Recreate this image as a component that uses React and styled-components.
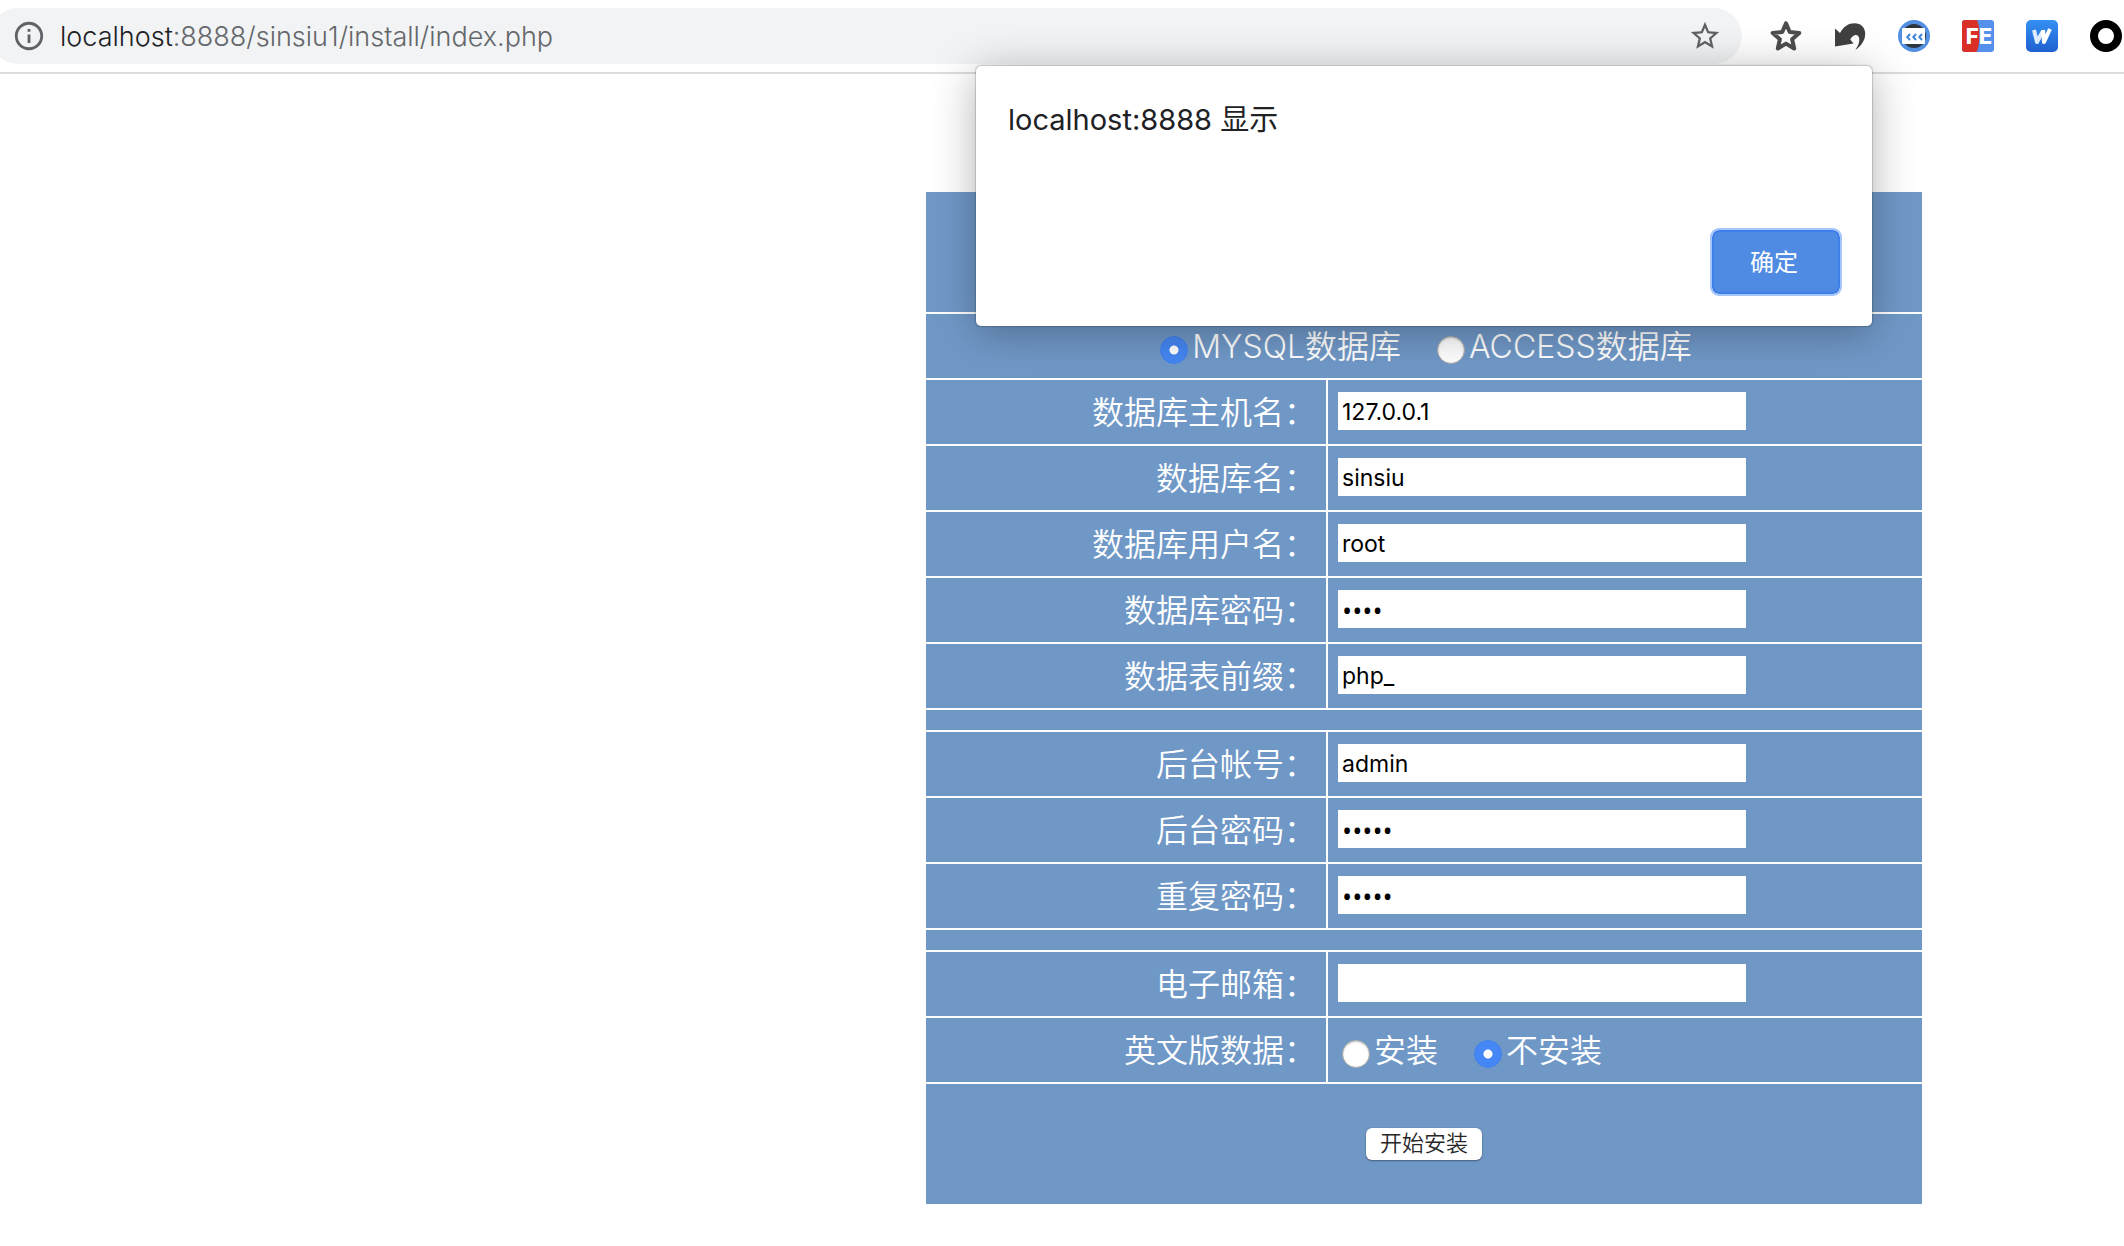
import React from "react";
import styled, { createGlobalStyle, css } from "styled-components";

const panelBlue = "#7098c7";
const uiFont = `Inter, "Noto Sans CJK SC", sans-serif`;

const GlobalStyle = createGlobalStyle`
  * { box-sizing: border-box; }
  body { margin: 0; background: #fff; font-family: ${uiFont}; overflow-x: hidden; }
  button, input { font-family: inherit; }
`;

const Page = styled.div`
  position: relative;
  min-height: 100vh;
  overflow: hidden;
`;

/* ---------- browser toolbar ---------- */

const Toolbar = styled.header`
  display: flex;
  align-items: center;
  gap: 28px;
  padding: 8px 2px 8px 0;
  border-bottom: 2px solid #dadce0;
`;

const AddressBar = styled.div`
  display: flex;
  align-items: center;
  flex: 1;
  height: 56px;
  margin-left: -10px;
  padding: 0 20px 0 22px;
  border-radius: 28px;
  background: #f1f3f4;
  color: #5f6368;
`;

const Address = styled.a`
  flex: 1;
  padding: 2px 0 0 14px;
  color: #64676b;
  font-size: 27px;
  font-weight: 300;
  line-height: 32px;
  text-decoration: none;
`;

const Host = styled.span`
  color: #202124;
`;

const IconButton = styled.button`
  display: flex;
  padding: 0;
  border: 0;
  background: none;
  color: ${(p) => p.$color || "inherit"};
`;

const Extensions = styled.nav`
  display: flex;
  gap: 32px;
`;

const Icon = styled.svg`
  display: block;
  width: ${(p) => p.$size || 32}px;
  height: ${(p) => p.$size || 32}px;
`;

const LogoText = styled.text`
  font-family: Inter, sans-serif;
  font-size: ${(p) => p.$size}px;
  font-weight: 800;
  fill: #fff;
  text-anchor: middle;
`;

const InfoIcon = () => (
  <Icon $size={34} viewBox="0 0 24 24" fill="currentColor">
    <path d="M11 17h2v-6h-2v6zm1-15C6.48 2 2 6.48 2 12s4.48 10 10 10 10-4.48 10-10S17.52 2 12 2zm0 18c-4.41 0-8-3.59-8-8s3.59-8 8-8 8 3.59 8 8-3.59 8-8 8zM11 9h2V7h-2v2z" />
  </Icon>
);

const StarIcon = () => (
  <Icon $size={34} viewBox="0 0 24 24" fill="currentColor">
    <path d="M22 9.24l-7.19-.62L12 2 9.19 8.63 2 9.24l5.46 4.73L5.82 21 12 17.27 18.18 21l-1.63-7.03L22 9.24zM12 15.4l-3.76 2.27 1-4.28-3.32-2.88 4.38-.38L12 6.1l1.71 4.04 4.38.38-3.32 2.88 1 4.28L12 15.4z" />
  </Icon>
);

const BoldStarIcon = () => (
  <Icon viewBox="0 0 32 32" fill="none" stroke="currentColor" strokeWidth="4" strokeLinejoin="round">
    <path d="M16 3.4l3.7 8.6 9.6.9-7.2 6.3 2.1 9.3L16 23.6l-8.2 4.9 2.1-9.3L2.7 12.9l9.6-.9z" />
  </Icon>
);

const UndoIcon = () => (
  <Icon viewBox="0 0 32 32" fill="currentColor">
    <path d="M1 8.5L6 13C9.5 6.500 14.500 3.300 20.500 3.300c6.800 0 11 4.700 10.700 11.200-.3 6.300-4 11.500-9.900 15.500 2.700-3.800 4.400-8 4-11.200-.4-3-2.300-4.300-4.700-3.500-2 .7-3.400 2.200-4.300 4.300l3.200 3.900L1 26.500z" />
  </Icon>
);

const CodeIcon = () => (
  <Icon viewBox="0 0 32 32">
    <circle cx="16" cy="16" r="16" fill="#5490e2" />
    <circle cx="16" cy="16" r="12" fill="#2d3540" />
    <rect x="4" y="8" width="23" height="16" rx="1" fill="#fff" />
    <path d="M12 14l-2.700 3 2.700 3M18 14l-2.700 3 2.700 3M24 14l-2.700 3 2.700 3" fill="none" stroke="#4384dc" strokeWidth="2" />
  </Icon>
);

const FeIcon = () => (
  <Icon viewBox="0 0 32 32">
    <rect width="32" height="32" rx="3" fill="#5590ea" />
    <path d="M3 0h12c2 5 2.500 10 2.500 16S16.500 28 14.500 32H3a3 3 0 0 1-3-3V3a3 3 0 0 1 3-3z" fill="#d92f25" />
    <LogoText x="17" y="24" $size={22}>FE</LogoText>
  </Icon>
);

const WIcon = () => (
  <Icon viewBox="0 0 32 32">
    <defs>
      <linearGradient id="wBlue" x1="0" y1="0" x2="0" y2="1">
        <stop offset="0" stopColor="#3490f2" />
        <stop offset="1" stopColor="#1f60d0" />
      </linearGradient>
    </defs>
    <rect width="32" height="32" rx="5" fill="url(#wBlue)" />
    <path d="M8 10l3 12 6-11" fill="none" stroke="#dcebfd" strokeWidth="4" strokeLinejoin="round" />
    <path d="M17 10l1 12 6-13" fill="none" stroke="#fff" strokeWidth="4" strokeLinejoin="round" />
  </Icon>
);

const RingIcon = () => (
  <Icon viewBox="0 0 32 32">
    <circle cx="16" cy="16" r="12" fill="#fff" stroke="#000" strokeWidth="8" />
  </Icon>
);

/* ---------- install form ---------- */

const Main = styled.main`
  padding: 118px 0 42px 724px;
`;

const Form = styled.form`
  display: flex;
  flex-direction: column;
  gap: 2px;
  width: 100%;
  max-width: 996px;
  margin: 0 auto;
  color: #fff;
  font-size: 32px;
  font-weight: 350;
  line-height: 40px;
`;

const Band = styled.div`
  display: flex;
  align-items: center;
  justify-content: center;
  gap: 32px;
  height: ${(p) => p.$height}px;
  background: ${panelBlue};
`;

const Row = styled.div`
  display: grid;
  grid-template-columns: 400px 1fr;
  gap: 2px;
  min-height: 64px;
`;

const cell = css`
  display: flex;
  align-items: center;
  padding: 0 10px;
  background: ${panelBlue};
`;

const LabelCell = styled.label`
  ${cell}
  justify-content: flex-end;
  padding-top: 2px;
`;

const FieldCell = styled.div`
  ${cell}
  gap: 32px;
  padding-bottom: ${(p) => (p.$choices ? 0 : 2)}px;
`;

const TextInput = styled.input`
  width: 408px;
  height: 38px;
  padding: 2px 4px 0;
  border: 0;
  border-radius: 0;
  background: #fff;
  color: #000;
  font-size: 23px;
  &[type="password"] {
    font-family: "Open Sans", sans-serif;
    font-size: 27px;
  }
`;

const Choice = styled.label`
  display: flex;
  align-items: center;
  gap: 4px;
  padding-left: 4px;
  font-weight: 300;
`;

const ChoiceText = styled.span`
  padding-top: 2px;
`;

const Radio = styled.input`
  appearance: none;
  width: 28px;
  height: 28px;
  margin: 8px 0 0;
  border-radius: 50%;
  border: 1px solid #a8a6a4;
  background: #fff;
  box-shadow: inset 0 1px 2px rgba(0, 0, 0, 0.2);
  &:checked {
    border-color: #3f82ee;
    background: radial-gradient(circle, #fff 0 4px, #4587f4 5px);
    box-shadow: none;
  }
`;

const ChoiceLabel = styled(ChoiceText)`
  font-weight: 350;
`;

const SubmitButton = styled.button`
  height: 32px;
  padding: 0 14px;
  border: 0;
  border-radius: 6px;
  background: #fff;
  color: #262626;
  box-shadow: 0 0 1px rgba(0, 0, 0, 0.4), 0 1px 2px rgba(0, 0, 0, 0.35);
  font-size: 22px;
  font-weight: 350;
  line-height: 30px;
  padding-bottom: 2px;
`;

const DB_FIELDS = [
  { id: "host", label: "数据库主机名：", value: "127.0.0.1" },
  { id: "name", label: "数据库名：", value: "sinsiu" },
  { id: "user", label: "数据库用户名：", value: "root" },
  { id: "pass", label: "数据库密码：", value: "root", type: "password" },
  { id: "prefix", label: "数据表前缀：", value: "php_" },
];

const ADMIN_FIELDS = [
  { id: "admin", label: "后台帐号：", value: "admin" },
  { id: "adminPass", label: "后台密码：", value: "admin", type: "password" },
  { id: "adminPass2", label: "重复密码：", value: "admin", type: "password" },
];

const CONTACT_FIELDS = [{ id: "email", label: "电子邮箱：", value: "" }];

const Fields = ({ items }) =>
  items.map(({ id, label, value, type = "text" }) => (
    <Row key={id}>
      <LabelCell htmlFor={id}>{label}</LabelCell>
      <FieldCell>
        <TextInput id={id} name={id} type={type} defaultValue={value} />
      </FieldCell>
    </Row>
  ));

const RadioChoice = ({ children, ...input }) => (
  <Choice>
    <Radio type="radio" {...input} />
    <ChoiceLabel>{children}</ChoiceLabel>
  </Choice>
);

/* ---------- alert dialog ---------- */

const DialogLayer = styled.div`
  position: absolute;
  top: 66px;
  left: 724px;
  right: 0;
  display: flex;
  justify-content: center;
`;

const Dialog = styled.section`
  display: flex;
  flex-direction: column;
  justify-content: space-between;
  width: 100%;
  max-width: 896px;
  min-height: 260px;
  padding: 34px 32px 32px;
  border-radius: 5px;
  background: #fff;
  box-shadow: 0 0 2px rgba(0, 0, 0, 0.55), 0 6px 44px rgba(0, 0, 0, 0.3);
`;

const DialogTitle = styled.h1`
  margin: 0;
  color: #202124;
  font-size: 29px;
  font-weight: 400;
  line-height: 40px;
`;

const ConfirmButton = styled.button`
  align-self: flex-end;
  width: 128px;
  height: 64px;
  padding: 0 4px 4px 0;
  border: 2px solid #3d7eea;
  border-radius: 7px;
  outline: 2px solid #a6c6fa;
  background: #4f8ae3;
  color: #fff;
  font-size: 24px;
  font-weight: 400;
`;

export default function App() {
  return (
    <Page>
      <GlobalStyle />
      <Toolbar>
        <AddressBar>
          <IconButton type="button" aria-label="Site information">
            <InfoIcon />
          </IconButton>
          <Address href="#">
            <Host>localhost</Host>:8888/sinsiu1/install/index.php
          </Address>
          <IconButton type="button" aria-label="Bookmark">
            <StarIcon />
          </IconButton>
        </AddressBar>
        <Extensions>
          <IconButton type="button" aria-label="Favourites" $color="#4d4d4d"><BoldStarIcon /></IconButton>
          <IconButton type="button" aria-label="Undo" $color="#404040"><UndoIcon /></IconButton>
          <IconButton type="button" aria-label="Code"><CodeIcon /></IconButton>
          <IconButton type="button" aria-label="FE helper"><FeIcon /></IconButton>
          <IconButton type="button" aria-label="W"><WIcon /></IconButton>
          <IconButton type="button" aria-label="Ring"><RingIcon /></IconButton>
        </Extensions>
      </Toolbar>

      <Main>
        <Form onSubmit={(e) => e.preventDefault()}>
          <Band $height={120} />
          <Band $height={64}>
            <RadioChoice name="dbType" value="mysql" defaultChecked>MYSQL数据库</RadioChoice>
            <RadioChoice name="dbType" value="access">ACCESS数据库</RadioChoice>
          </Band>
          <Fields items={DB_FIELDS} />
          <Band $height={20} />
          <Fields items={ADMIN_FIELDS} />
          <Band $height={20} />
          <Fields items={CONTACT_FIELDS} />
          <Row>
            <LabelCell as="div" id="english">英文版数据：</LabelCell>
            <FieldCell $choices role="radiogroup" aria-labelledby="english">
              <RadioChoice name="english" value="yes">安装</RadioChoice>
              <RadioChoice name="english" value="no" defaultChecked>不安装</RadioChoice>
            </FieldCell>
          </Row>
          <Band $height={120}>
            <SubmitButton type="submit">开始安装</SubmitButton>
          </Band>
        </Form>
      </Main>

      <DialogLayer>
        <Dialog role="alertdialog" aria-labelledby="dialogTitle">
          <DialogTitle id="dialogTitle">localhost:8888 显示</DialogTitle>
          <ConfirmButton type="button">确定</ConfirmButton>
        </Dialog>
      </DialogLayer>
    </Page>
  );
}
